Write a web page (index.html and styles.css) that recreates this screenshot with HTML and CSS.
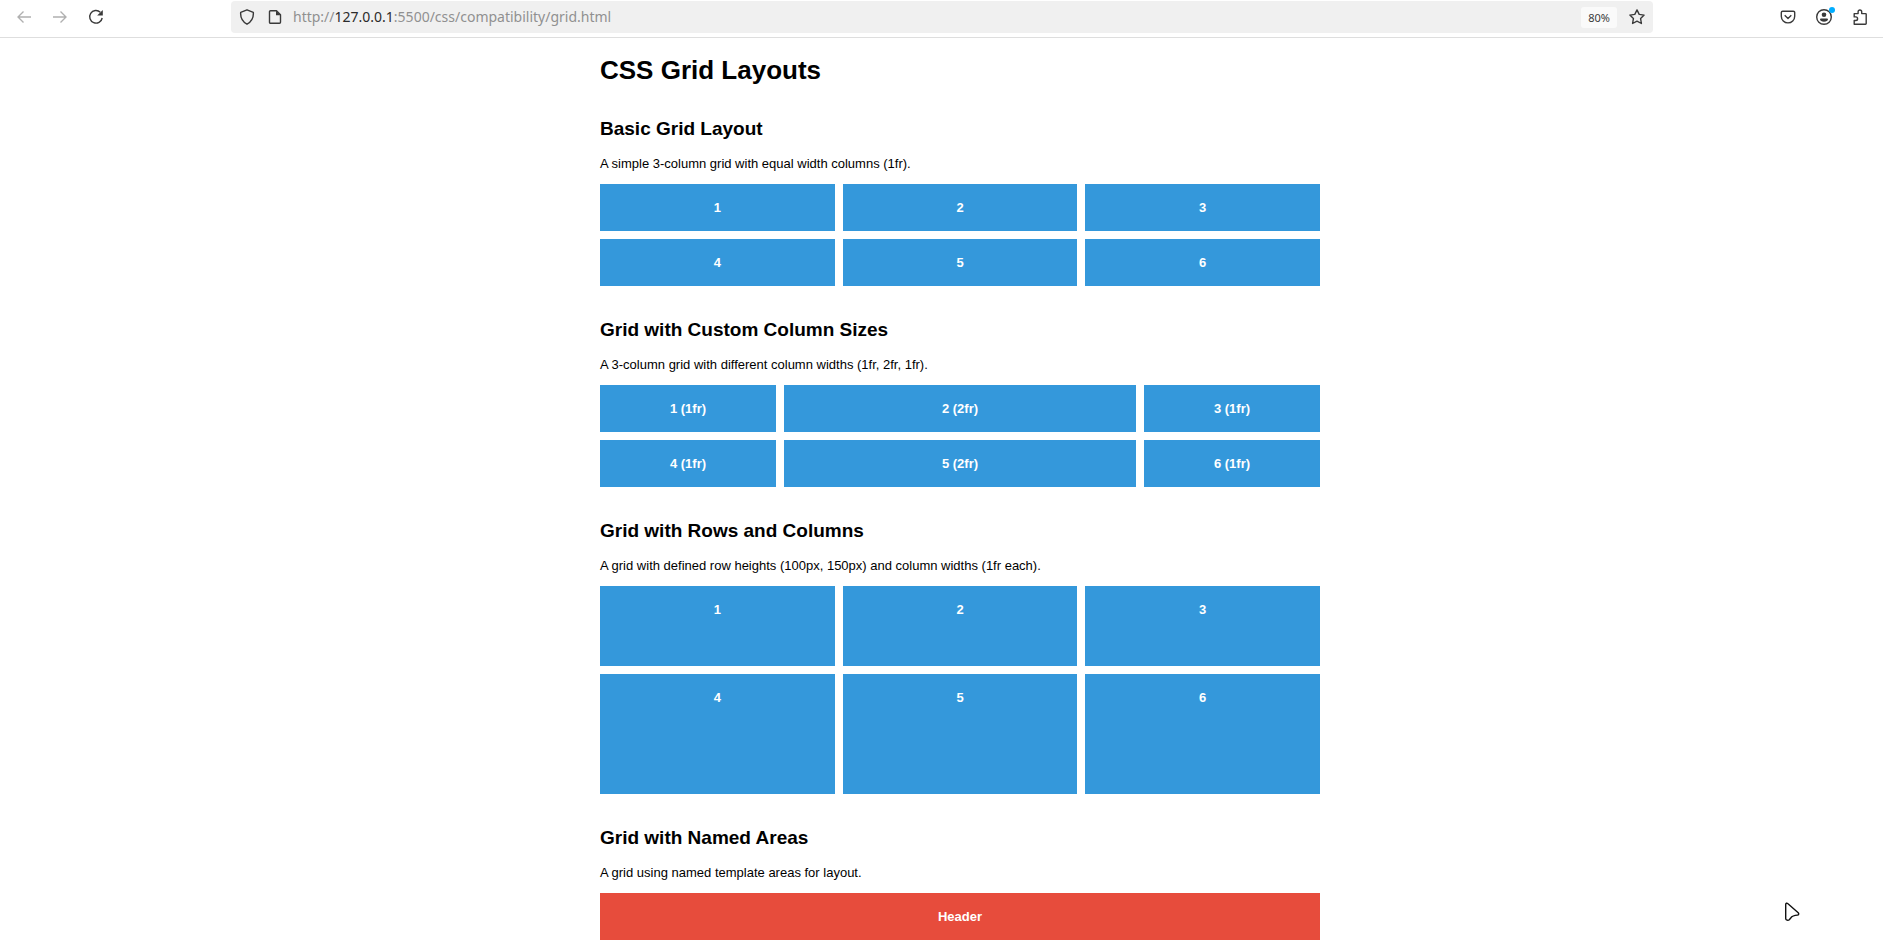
FILE: index.html
```html
<!DOCTYPE html>
<html lang="en">
<head>
<meta charset="utf-8">
<title>CSS Grid Layouts</title>
<link rel="stylesheet" href="styles.css">
</head>
<body>
<header class="toolbar">
  <nav class="toolbar-group" aria-label="History">
    <button class="tool faded" type="button" aria-label="Back"><svg class="icon" viewBox="0 0 16 16"><path d="M7.500 2.600 2 8l5.500 5.400M1.500 8h13.500"/></svg></button>
    <button class="tool faded" type="button" aria-label="Forward"><svg class="icon" viewBox="0 0 16 16"><path d="M8.500 2.600 14 8l-5.500 5.400M14.500 8H1"/></svg></button>
    <button class="tool" type="button" aria-label="Reload"><svg class="icon" viewBox="0 0 16 16"><path d="M12.300 3.200A6.300 6.300 0 1 0 14.200 9"/><path class="fill" d="M14.800 1v5.600H9.200z"/></svg></button>
  </nav>
  <div class="urlbar">
    <button class="site" type="button" aria-label="Tracking protection"><svg class="icon" viewBox="0 0 16 16"><path d="M8 .8 14.300 3.300c.4 4.500-1.200 9-6.300 11.900C2.900 12.300 1.300 7.800 1.700 3.300z"/></svg></button>
    <button class="site" type="button" aria-label="Site information"><svg class="icon" viewBox="0 0 16 16"><path d="M3.500 1.700h6l4 4v7.600a1 1 0 0 1-1 1h-9a1 1 0 0 1-1-1V2.700a1 1 0 0 1 1-1z"/><path class="fill" d="M9 1.500v4.700h4.700z"/></svg></button>
    <div class="address" role="textbox" contenteditable="true" spellcheck="false" aria-label="Address">http://<span class="host">127.0.0.1</span>:5500/css/compatibility/grid.html</div>
    <button class="zoom" type="button">80%</button>
    <button class="star" type="button" aria-label="Bookmark this page"><svg class="icon" viewBox="0 0 16 16"><path d="m8 .9 2.200 4.500 4.900.7-3.500 3.500.8 4.900L8 12.200l-4.400 2.300.8-4.900L.9 6.100l4.900-.7z"/></svg></button>
  </div>
  <div class="toolbar-group">
    <button class="tool" type="button" aria-label="Save to Pocket"><svg class="icon" viewBox="0 0 16 16"><path d="M2.700 2.200h10.600a1.400 1.400 0 0 1 1.400 1.400v3.600a6.700 6.700 0 0 1-13.400 0V3.600a1.400 1.400 0 0 1 1.400-1.400zM4.700 6.300 8 9.400l3.300-3.100"/></svg></button>
    <button class="tool account" type="button" aria-label="Account"><svg class="icon" viewBox="0 0 16 16"><circle cx="8" cy="8" r="7.300"/><circle class="fill" cx="8" cy="5.800" r="2.300"/><path class="fill" d="M5 9.500h6a1 1 0 0 1 1 1c0 1-1.800 2.200-4 2.200s-4-1.200-4-2.200a1 1 0 0 1 1-1z"/></svg></button>
    <button class="tool" type="button" aria-label="Extensions"><svg class="icon" viewBox="0 0 16 16"><path d="M2.200 15.200v-3.700h1.600a1.800 1.800 0 0 0 0-3.600H2.200V4.600h3.900V2.800a1.800 1.800 0 0 1 3.600 0v1.800h3.800a.7.7 0 0 1 .7.700v9.200a.7.7 0 0 1-.7.700z"/></svg></button>
  </div>
</header>

<div class="viewport">
  <main class="page">
    <h1 class="title">CSS Grid Layouts</h1>

    <section class="example">
      <h2 class="heading">Basic Grid Layout</h2>
      <p class="text">A simple 3-column grid with equal width columns (1fr).</p>
      <div class="grid basic">
        <div class="item">1</div><div class="item">2</div><div class="item">3</div>
        <div class="item">4</div><div class="item">5</div><div class="item">6</div>
      </div>
    </section>

    <section class="example">
      <h2 class="heading">Grid with Custom Column Sizes</h2>
      <p class="text">A 3-column grid with different column widths (1fr, 2fr, 1fr).</p>
      <div class="grid custom">
        <div class="item">1 (1fr)</div><div class="item">2 (2fr)</div><div class="item">3 (1fr)</div>
        <div class="item">4 (1fr)</div><div class="item">5 (2fr)</div><div class="item">6 (1fr)</div>
      </div>
    </section>

    <section class="example">
      <h2 class="heading">Grid with Rows and Columns</h2>
      <p class="text">A grid with defined row heights (100px, 150px) and column widths (1fr each).</p>
      <div class="grid rows">
        <div class="item">1</div><div class="item">2</div><div class="item">3</div>
        <div class="item">4</div><div class="item">5</div><div class="item">6</div>
      </div>
    </section>

    <section class="example">
      <h2 class="heading">Grid with Named Areas</h2>
      <p class="text">A grid using named template areas for layout.</p>
      <div class="grid areas">
        <div class="item area-header">Header</div>
      </div>
    </section>
  </main>
</div>

<svg class="pointer" viewBox="0 0 16 20" aria-hidden="true"><path d="M1.700 2.500c0-1.300 1.200-1.700 2-.9l10.500 9.200c1 1 .5 2.300-.7 2.300-3 .1-5.200.5-6.800 2.900l-1.400 1.700c-1.200 1.100-3.600.6-3.600-1.200z"/></svg>
</body>
</html>
```
FILE: styles.css
```css
* { box-sizing: border-box; }

body {
  margin: 0;
  background: #fff;
  color: #000;
  font: 13px/15px "Liberation Sans", Arial, sans-serif;
}

button {
  display: flex;
  align-items: center;
  justify-content: center;
  padding: 0;
  border: 0;
  background: none;
  color: #3a3a3a;
}

/* Toolbar */
.toolbar {
  display: flex;
  align-items: flex-start;
  padding: 1px 5px 4px 6px;
  border-bottom: 1px solid #dedede;
}

.toolbar-group { display: flex; }

.tool {
  width: 36px;
  height: 32px;
}

.tool.faded { color: #b0b0b0; }

.icon {
  width: 16px;
  height: 16px;
  fill: none;
  stroke: currentColor;
  stroke-width: 1.4;
  stroke-linejoin: round;
}

.icon .fill {
  fill: currentColor;
  stroke: none;
}

.urlbar {
  display: flex;
  flex: 1;
  align-items: center;
  height: 32px;
  margin: 0 117px;
  padding: 0 2px;
  border-radius: 4px;
  background: #f0f0f0;
}

.site {
  width: 28px;
  height: 28px;
}

.address {
  flex: 1;
  padding-left: 4px;
  color: #909090;
  font: 14px/20px "Noto Sans", sans-serif;
  white-space: nowrap;
  overflow: hidden;
}

.host { color: #2b2b2b; }

.zoom {
  width: 36px;
  height: 21px;
  margin-right: 6px;
  border-radius: 3px;
  background: #fafafa;
  font: 11px/15px "Noto Sans", sans-serif;
}

.star {
  width: 28px;
  height: 28px;
}

.account { position: relative; }

.account::after {
  content: "";
  position: absolute;
  top: 6px;
  right: 7px;
  width: 6px;
  height: 6px;
  border-radius: 50%;
  background: #00adff;
}

/* Page */
.viewport { padding-left: 37px; }

.page {
  max-width: 720px;
  margin: 0 auto;
  padding-top: 17px;
}

.title {
  margin: 0 0 33px;
  font-size: 26px;
  line-height: 30px;
}

.example { margin-bottom: 33px; }

.example:last-child { margin-bottom: 0; }

.heading {
  margin: 0 0 16px;
  font-size: 19px;
  line-height: 22px;
}

.text { margin: 0 0 13px; }

.grid {
  display: grid;
  gap: 8px;
}

.basic { grid-template-columns: repeat(3, 1fr); }

.custom { grid-template-columns: 1fr 2fr 1fr; }

.rows {
  grid-template-columns: repeat(3, 1fr);
  grid-template-rows: 80px 120px;
}

.areas { grid-template-areas: "header"; }

.item {
  padding: 16px;
  background: #3498db;
  color: #fff;
  font-weight: bold;
  text-align: center;
}

.area-header {
  grid-area: header;
  background: #e74c3c;
}

/* Mouse pointer over the page */
.pointer {
  position: fixed;
  right: 83px;
  bottom: 21px;
  width: 16px;
  height: 20px;
  fill: #fff;
  stroke: #111;
  stroke-width: 1.4;
}
```
